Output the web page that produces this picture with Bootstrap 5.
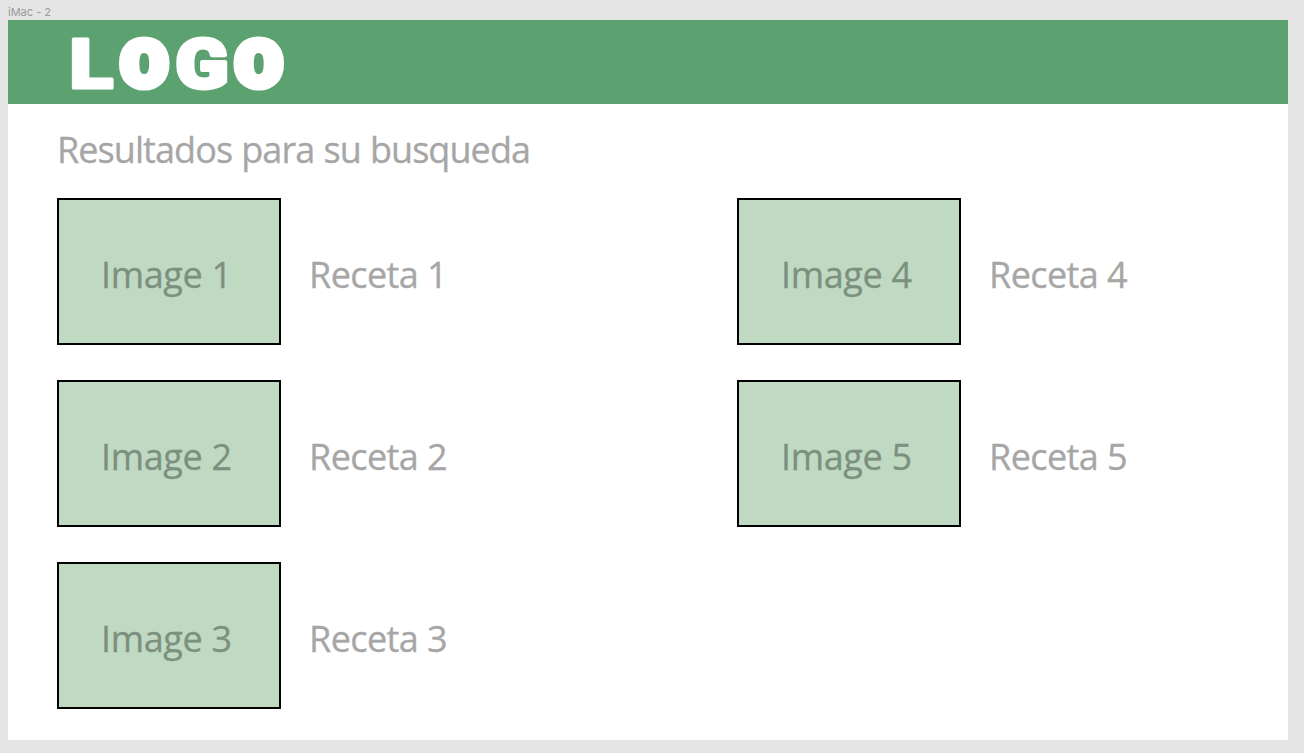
<!DOCTYPE html>
<html lang="es">
<head>
<meta charset="utf-8">
<meta name="viewport" content="width=device-width, initial-scale=1">
<title>Resultados</title>
<link rel="stylesheet" href="https://cdn.jsdelivr.net/npm/bootstrap@5.3.0/dist/css/bootstrap.min.css">
<style>
body{background:#e5e5e5;font-family:"Open Sans",sans-serif;padding:0 16px 0 8px}
.frame-name{font:11px/20px Inter,sans-serif;height:20px;padding-top:2px;color:#999}
.artboard{height:720px}
.topbar{height:84px;background:#5ca170}
.logo{display:block;margin-left:56px}
.logo text{font:900 63px Roboto,sans-serif;fill:#fff;stroke:#fff;stroke-width:8px;stroke-linejoin:round}
.logo .initial{font-size:69px;stroke-width:3px}
.logo .open-letter{font-size:69px;stroke-width:4px}
.content{padding:20px 0 0 49px;color:#a6a6a6;font-size:36px;line-height:52px;-webkit-text-stroke:.3px currentColor}
.heading{font-size:36px;line-height:52px;font-weight:400;margin:0 0 22px;letter-spacing:-.93px;word-spacing:.7px}
.results{display:grid;grid-template-columns:680px 1fr;grid-template-rows:repeat(3,147px);grid-auto-flow:column;row-gap:35px;letter-spacing:-.58px}
.thumb{width:224px;height:147px;border:2px solid #000;background:#c0d9c3;color:#7b917e;padding:6px 0 0 42px;letter-spacing:-.35px}
.title{margin-left:28px;padding-top:6px}
</style>
</head>
<body>
<div class="frame-name">iMac - 2</div>
<main class="artboard bg-white">
  <header class="topbar d-flex align-items-center">
    <svg class="logo" width="240" height="84" role="img" aria-label="LOGO">
      <text class="initial" x="5.3" y="68.4" textLength="44" lengthAdjust="spacingAndGlyphs">L</text>
      <text x="57" y="66.4" textLength="46.5" lengthAdjust="spacingAndGlyphs">O</text>
      <text class="open-letter" x="111.5" y="68.2" textLength="53" lengthAdjust="spacingAndGlyphs">G</text>
      <text x="171.5" y="66.4" textLength="46.5" lengthAdjust="spacingAndGlyphs">O</text>
    </svg>
  </header>
  <section class="content">
    <h1 class="heading">Resultados para su busqueda</h1>
    <div class="results">
      <article class="d-flex align-items-center"><div class="thumb d-flex align-items-center">Image 1</div><div class="title">Receta 1</div></article>
      <article class="d-flex align-items-center"><div class="thumb d-flex align-items-center">Image 2</div><div class="title">Receta 2</div></article>
      <article class="d-flex align-items-center"><div class="thumb d-flex align-items-center">Image 3</div><div class="title">Receta 3</div></article>
      <article class="d-flex align-items-center"><div class="thumb d-flex align-items-center">Image 4</div><div class="title">Receta 4</div></article>
      <article class="d-flex align-items-center"><div class="thumb d-flex align-items-center">Image 5</div><div class="title">Receta 5</div></article>
    </div>
  </section>
</main>
<script src="https://cdn.jsdelivr.net/npm/bootstrap@5.3.0/dist/js/bootstrap.bundle.min.js"></script>
</body>
</html>
